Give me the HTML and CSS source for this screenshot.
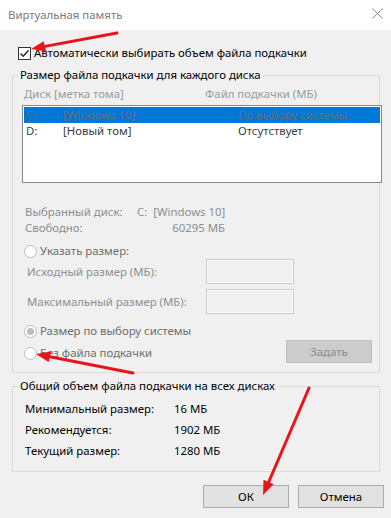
FILE: index.html
```html
<!DOCTYPE html>
<html lang="ru">
<head>
<meta charset="utf-8">
<title>Виртуальная память</title>
<link rel="stylesheet" href="styles.css">
</head>
<body>
<div class="window">
  <div class="titlebar">
    <span class="title">Виртуальная память</span>
    <svg class="close" width="11" height="11" viewBox="0 0 11 11"><path d="M0.5 0.5 L10.5 10.5 M10.5 0.5 L0.5 10.5" stroke="#8a8a8a" stroke-width="1" fill="none"/></svg>
  </div>
  <div class="main">
    <div class="check-row">
      <span class="checkbox"><svg width="11" height="11" viewBox="0 0 11 11"><path d="M1.5 5.5 L4.2 8.3 L9.6 2.2" stroke="#222" stroke-width="1.3" fill="none"/></svg></span>
      <span>Автоматически выбирать объем файла подкачки</span>
    </div>

    <fieldset class="group group-disks">
      <legend>Размер файла подкачки для каждого диска</legend>
      <div class="list-head"><span class="head-disk">Диск [метка тома]</span><span>Файл подкачки (МБ)</span></div>
      <div class="listbox">
        <div class="row selected"><span class="col-letter">C:</span><span class="col-label">[Windows 10]</span><span>По выбору системы</span></div>
        <div class="row"><span class="col-letter">D:</span><span class="col-label">[Новый том]</span><span>Отсутствует</span></div>
      </div>
      <div class="info">
        <span>Выбранный диск:</span><span>C:&nbsp; [Windows 10]</span>
        <span>Свободно:</span><span class="num">60295 МБ</span>
      </div>
      <div class="radio-row first"><span class="radio"></span><span>Указать размер:</span></div>
      <div class="field-row"><span class="field-label">Исходный размер (МБ):</span><span class="textbox"></span></div>
      <div class="field-row second"><span class="field-label">Максимальный размер (МБ):</span><span class="textbox"></span></div>
      <div class="radio-row sys"><span class="radio checked"></span><span>Размер по выбору системы</span></div>
      <div class="last-row">
        <div class="radio-row none"><span class="radio"></span><span>Без файла подкачки</span></div>
        <button class="btn btn-set" disabled>Задать</button>
      </div>
    </fieldset>

    <fieldset class="group group-total">
      <legend>Общий объем файла подкачки на всех дисках</legend>
      <div class="totals">
        <span>Минимальный размер:</span><span>16 МБ</span>
        <span>Рекомендуется:</span><span>1902 МБ</span>
        <span>Текущий размер:</span><span>1280 МБ</span>
      </div>
    </fieldset>

    <div class="buttons">
      <button class="btn">ОК</button>
      <button class="btn">Отмена</button>
    </div>
  </div>

  <svg class="annotations" width="391" height="518" viewBox="0 0 391 518">
    <g stroke="#e8141c" stroke-width="3" stroke-linecap="round" fill="none">
      <line x1="117" y1="33" x2="45" y2="46.4"/>
      <line x1="133" y1="373" x2="50" y2="356.8"/>
      <line x1="309" y1="388" x2="268.5" y2="482.5"/>
    </g>
    <g fill="#e8141c">
      <polygon points="31,49 46.2,51.6 43.6,41.2"/>
      <polygon points="36,354 48.6,362 51.2,351.4"/>
      <polygon points="263,495 273.6,484.2 263.5,479.8"/>
    </g>
  </svg>
</div>
</body>
</html>
```

FILE: styles.css
```css
html, body {
  margin: 0;
  padding: 0;
}

body {
  font-family: "Noto Sans", "Liberation Sans", sans-serif;
  font-size: 11.4px;
  line-height: 16px;
  color: #000;
  background: #f0f0f0;
}

.window {
  position: relative;
  width: 391px;
  height: 518px;
  overflow: hidden;
  background: #f0f0f0;
  white-space: nowrap;
}

.titlebar {
  height: 30px;
  background: #fff;
  display: flex;
  align-items: center;
  justify-content: space-between;
  padding: 0 8px;
  box-sizing: border-box;
}

.title {
  color: #7a7a7a;
}

.close {
  margin-bottom: 3px;
}

.main {
  padding: 15px 11px 0 12px;
}

.check-row {
  display: flex;
  align-items: center;
  gap: 3px;
  height: 16px;
  padding-left: 6px;
}

.checkbox {
  width: 13px;
  height: 13px;
  box-sizing: border-box;
  border: 1px solid #333;
  background: #fff;
  display: flex;
  align-items: center;
  justify-content: center;
}

.group {
  margin: 6px 0 0;
  padding: 0;
  border: 1px solid #dcdcdc;
  min-width: 0;
}

.group legend {
  margin-left: 5px;
  padding: 0 2px;
  line-height: 16px;
}

.list-head {
  display: flex;
  margin-top: 3px;
  padding-left: 11px;
  color: #9a9a9a;
}

.head-disk {
  width: 181px;
}

.listbox {
  margin: 3px -3px 0 9px;
  height: 78px;
  box-sizing: border-box;
  border: 1px solid #828790;
  background: #fff;
  padding: 1px;
}

.row {
  display: flex;
  height: 16px;
  padding-left: 2px;
  color: #3c3c3c;
}

.row.selected {
  background: #0078d7;
  color: #6d6d6d;
}

.col-letter {
  width: 37px;
}

.col-label {
  width: 175px;
}

.info {
  display: grid;
  grid-template-columns: 112px 88px;
  margin-top: 21px;
  padding-left: 12px;
  color: #8e8e8e;
}

.info .num {
  text-align: right;
}

.radio-row {
  display: flex;
  align-items: center;
  gap: 3px;
  height: 16px;
  padding-left: 11px;
  color: #6d6d6d;
}

.radio-row.first {
  margin-top: 7px;
}

.radio {
  width: 13px;
  height: 13px;
  box-sizing: border-box;
  border: 1px solid #bcbcbc;
  border-radius: 50%;
  background: #fff;
  display: flex;
  align-items: center;
  justify-content: center;
}

.radio.checked::after {
  content: "";
  width: 7px;
  height: 7px;
  border-radius: 50%;
  background: #bcbcbc;
}

.field-row {
  display: flex;
  align-items: center;
  height: 25px;
  padding-left: 14px;
  color: #8e8e8e;
}

.field-row.second {
  margin-top: 5px;
}

.field-label {
  flex: 0 0 179px;
}

.textbox {
  width: 88px;
  height: 25px;
  box-sizing: border-box;
  border: 1px solid #cccccc;
  box-shadow: inset 0 0 0 1px #fafafa;
  background: #f0f0f0;
}

.radio-row.sys {
  margin-top: 9px;
}

.last-row {
  display: flex;
  justify-content: space-between;
  align-items: flex-start;
  height: 23px;
  margin-top: 1px;
  padding-bottom: 9px;
}

.radio-row.none {
  margin-top: 5px;
}

.btn {
  font: inherit;
  width: 86px;
  height: 23px;
  padding: 0;
  box-sizing: border-box;
  border: 1px solid #adadad;
  background: #e1e1e1;
  color: #000;
}

.btn-set {
  margin-right: 7px;
  background: #cccccc;
  border-color: #bfbfbf;
  color: #8a8a8a;
}

.group-total {
  margin-top: 5px;
}

.totals {
  display: grid;
  grid-template-columns: 149px auto;
  row-gap: 5px;
  margin-top: 7px;
  padding-left: 12px;
  padding-bottom: 12px;
}

.buttons {
  display: flex;
  justify-content: flex-end;
  gap: 9px;
  margin: 13px -4px 0 0;
}

.annotations {
  position: absolute;
  top: 0;
  left: 0;
  pointer-events: none;
}
```
